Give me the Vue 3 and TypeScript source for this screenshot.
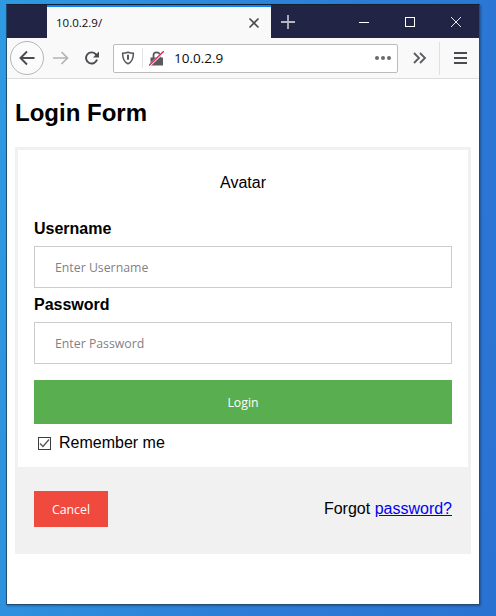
<script setup lang="ts">
import { ref } from 'vue'

const remember = ref(true)
</script>

<template>
  <div class="desktop">
    <div class="window">
      <!-- title bar -->
      <div class="titlebar">
        <div class="tab">
          <span class="tab-title">10.0.2.9/</span>
          <svg class="tab-close" width="12" height="12" viewBox="0 0 12 12">
            <path d="M1.5 1.5l9 9M10.5 1.5l-9 9" stroke="#4a4a4f" stroke-width="1.6" fill="none" />
          </svg>
        </div>
        <svg class="new-tab" width="16" height="16" viewBox="0 0 16 16">
          <path d="M8 1v14M1 8h14" stroke="#b6b7c0" stroke-width="1.8" fill="none" />
        </svg>
        <div class="win-controls">
          <svg width="12" height="12" viewBox="0 0 12 12">
            <path d="M1 6.5h10" stroke="#fff" stroke-width="1" fill="none" />
          </svg>
          <svg width="12" height="12" viewBox="0 0 12 12">
            <rect x="1.5" y="1.5" width="9" height="9" stroke="#fff" stroke-width="1" fill="none" />
          </svg>
          <svg width="12" height="12" viewBox="0 0 12 12">
            <path d="M1 1l10 10M11 1L1 11" stroke="#fff" stroke-width="0.9" fill="none" />
          </svg>
        </div>
      </div>

      <!-- toolbar -->
      <div class="toolbar">
        <div class="back-btn">
          <svg width="18" height="18" viewBox="0 0 18 18">
            <path d="M16.5 9H2.5M9 2.5L2.5 9 9 15.5" stroke="#4a4a4f" stroke-width="1.9" fill="none" />
          </svg>
        </div>
        <svg class="forward" width="16" height="16" viewBox="0 0 16 16">
          <path d="M0 8h14.5M8.5 2l6 6-6 6" stroke="#b3b3b5" stroke-width="1.7" fill="none" />
        </svg>
        <svg class="reload" width="16" height="16" viewBox="0 0 16 16">
          <path d="M13 9.5A5.6 5.6 0 1 1 11.6 4L14 6.2" stroke="#4a4a4f" stroke-width="1.9" fill="none" />
          <path d="M15 1.5v6h-6z" fill="#4a4a4f" />
        </svg>
        <div class="urlbar">
          <svg class="shield" width="14" height="14" viewBox="0 0 14 14">
            <path d="M7 1.2c2 .8 3.600 1 5.400 1 0 5-1.600 8.800-5.400 10.600C3.200 11 1.600 7.200 1.600 2.200c1.800 0 3.400-.2 5.400-1z" stroke="#55555a" stroke-width="1.500" fill="none" />
            <path d="M7 3.700v5" stroke="#55555a" stroke-width="2" fill="none" />
          </svg>
          <span class="url-sep"></span>
          <svg class="lock" width="15" height="15" viewBox="0 0 15 15">
            <path d="M1.500 6.500h12.500v8H1.500z" fill="#59595e" />
            <path d="M4.500 7V4.500a3.200 3.200 0 0 1 6.400 0V7" stroke="#59595e" stroke-width="1.800" fill="none" />
            <path d="M0 15L15 .5" stroke="#f9f9fa" stroke-width="2.400" fill="none" />
            <path d="M0 14.500L15 0" stroke="#e22850" stroke-width="1.400" fill="none" />
          </svg>
          <span class="url-text">10.0.2.9</span>
          <span class="url-dots"><i></i><i></i><i></i></span>
        </div>
        <svg class="overflow" width="14" height="12" viewBox="0 0 14 12">
          <path d="M1 1l5 5-5 5M7 1l5 5-5 5" stroke="#5b5b60" stroke-width="1.800" fill="none" />
        </svg>
        <span class="tool-sep"></span>
        <svg class="menu" width="13" height="12" viewBox="0 0 13 12">
          <path d="M0 1h13M0 6h13M0 11h13" stroke="#4a4a4f" stroke-width="1.800" fill="none" />
        </svg>
      </div>

      <!-- page -->
      <div class="page">
        <h2 class="page-title">Login Form</h2>
        <form class="login-form" @submit.prevent>
          <div class="form-body">
            <div class="avatar">Avatar</div>
            <label class="field-label" for="uname">Username</label>
            <input id="uname" class="field" type="text" placeholder="Enter Username" />
            <label class="field-label" for="psw">Password</label>
            <input id="psw" class="field" type="password" placeholder="Enter Password" />
            <button class="btn-login" type="submit">Login</button>
            <label class="remember" @click.prevent="remember = !remember">
              <span class="check">
                <svg v-if="remember" width="11" height="11" viewBox="0 0 11 11">
                  <path d="M1 5.500l3 3 6-7" stroke="#555" stroke-width="1.300" fill="none" />
                </svg>
              </span>
              Remember me
            </label>
          </div>
          <div class="form-footer">
            <button class="btn-cancel" type="button">Cancel</button>
            <span class="forgot">Forgot <a href="#">password?</a></span>
          </div>
        </form>
      </div>
    </div>
  </div>
</template>

<style>
html,
body {
  margin: 0;
  padding: 0;
}
</style>

<style scoped>
.desktop {
  width: 496px;
  height: 616px;
  padding: 4px 0 0 6px;
  box-sizing: border-box;
  overflow: hidden;
  background: linear-gradient(100deg, #2f9ae2 0%, #2c7cd6 60%, #2a72d2 100%);
  font-family: "Liberation Sans", Arial, sans-serif;
}

.window {
  width: 474px;
  height: 601px;
  box-sizing: border-box;
  border: 1px solid #1f4f78;
  border-top-color: #16202e;
  display: flex;
  flex-direction: column;
  background: #fff;
  box-shadow: 1px 1px 2px rgba(0, 0, 0, 0.3);
}

/* title bar */
.titlebar {
  height: 33px;
  flex: none;
  display: flex;
  align-items: center;
  padding-left: 40px;
  background: #222445;
}

.tab {
  width: 224px;
  height: 33px;
  box-sizing: border-box;
  display: flex;
  align-items: center;
  justify-content: space-between;
  padding: 0 11px 0 9px;
  background: #f9f9fa;
  border-top: 2px solid #0a84ff;
}

.tab-title {
  font-family: "Open Sans", sans-serif;
  font-size: 11.5px;
  color: #0c0c0d;
}

.new-tab {
  margin-left: 9px;
}

.win-controls {
  margin-left: auto;
  display: flex;
  gap: 34px;
  padding-right: 17px;
}

/* toolbar */
.toolbar {
  height: 41px;
  flex: none;
  box-sizing: border-box;
  display: flex;
  align-items: center;
  padding: 0 12px 0 3px;
  background: #f9f9fa;
  border-bottom: 1px solid #dcdcde;
}

.back-btn {
  width: 32px;
  height: 32px;
  border: 1px solid #b5b5b7;
  border-radius: 50%;
  background: #fbfbfb;
  display: flex;
  align-items: center;
  justify-content: center;
}

.forward {
  margin-left: 9px;
}

.reload {
  margin-left: 15px;
}

.urlbar {
  width: 285px;
  height: 29px;
  margin-left: 13px;
  box-sizing: border-box;
  display: flex;
  align-items: center;
  background: #fff;
  border: 1px solid #bcbcbe;
  border-radius: 2px;
}

.shield {
  margin-left: 7px;
}

.url-sep {
  width: 1px;
  height: 20px;
  margin-left: 7px;
  background: #e3e3e5;
}

.lock {
  margin-left: 6px;
}

.url-text {
  margin-left: 10px;
  font-family: "Open Sans", sans-serif;
  font-size: 13.5px;
  color: #0c0c0d;
}

.url-dots {
  margin-left: auto;
  padding-right: 6px;
  display: flex;
  gap: 2px;
}

.url-dots i {
  width: 4px;
  height: 4px;
  border-radius: 50%;
  background: #6a6a6e;
}

.overflow {
  margin-left: 15px;
}

.tool-sep {
  width: 1px;
  height: 33px;
  margin-left: 12px;
  background: #e0e0e2;
}

.menu {
  margin-left: 14px;
}

/* page */
.page {
  flex: 1;
  padding: 0 8px;
  background: #fff;
}

.page-title {
  margin: 20px 0 20px;
  font-size: 24px;
  line-height: 28px;
  font-weight: 700;
  color: #000;
}

.login-form {
  border: 3px solid #f1f1f1;
  border-bottom: 0;
}

.form-body {
  padding: 0 16px;
  display: flex;
  flex-direction: column;
  align-items: stretch;
}

.avatar {
  margin-top: 24px;
  margin-bottom: 28px;
  text-align: center;
  font-size: 16px;
  line-height: 18px;
}

.field-label {
  font-size: 16px;
  line-height: 18px;
  font-weight: 700;
}

.field {
  height: 42px;
  box-sizing: border-box;
  margin: 8px 0;
  padding: 0 20px;
  border: 1px solid #ccc;
  font-family: "Open Sans", sans-serif;
  font-size: 12.3px;
  background: #fff;
}

.field::placeholder {
  color: #857f85;
  opacity: 1;
}

.btn-login {
  height: 44px;
  margin-top: 8px;
  border: 0;
  background: #59ae50;
  color: #fff;
  font-family: "Open Sans", sans-serif;
  font-size: 12.3px;
}

.remember {
  display: flex;
  align-items: center;
  height: 18px;
  margin: 10px 0 15px;
  padding-left: 4px;
  font-size: 16px;
  line-height: 18px;
}

.check {
  width: 11px;
  height: 11px;
  margin-right: 8px;
  border: 1px solid #3c3c3c;
  display: flex;
  align-items: center;
  justify-content: center;
}

.form-footer {
  margin: 0 -3px;
  height: 87px;
  box-sizing: border-box;
  padding: 24px 19px 0;
  display: flex;
  justify-content: space-between;
  align-items: flex-start;
  background: #f1f1f1;
}

.btn-cancel {
  width: 74px;
  height: 36px;
  border: 0;
  background: #f0493e;
  color: #fff;
  font-family: "Open Sans", sans-serif;
  font-size: 12.3px;
}

.forgot {
  margin-top: 9px;
  font-size: 16px;
  line-height: 18px;
  color: #000;
}

.forgot a {
  color: #0000ee;
}
</style>
